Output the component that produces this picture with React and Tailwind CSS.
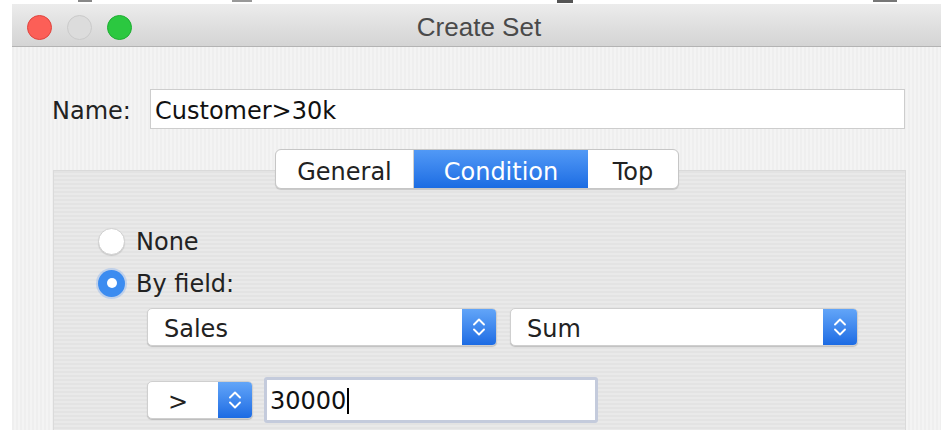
import React from 'react';

const bodyFont = { fontFamily: '"DejaVu Sans", "Liberation Sans", sans-serif' };

// little up/down arrows drawn on the blue end of a popup button
const Stepper = () => (
  <svg width="14" height="22" viewBox="0 0 14 22" fill="none" stroke="white" strokeWidth="1.9" strokeLinecap="round" strokeLinejoin="round">
    <path d="M2 8.5 L7 3.5 L12 8.5" />
    <path d="M2 13.5 L7 18.5 L12 13.5" />
  </svg>
);

const PopUp = ({ label, width, textPad = 'pl-[16px]' }) => (
  <div
    className="flex h-[38px] rounded-[5px] bg-white border border-[#cfcfcf] shadow-[0_1px_1px_rgba(0,0,0,0.18)] overflow-hidden"
    style={{ width }}
  >
    <div className={`flex-1 flex items-center pt-[3px] ${textPad} text-[24px] text-[#222]`}>{label}</div>
    <div className="w-[34px] flex items-center justify-center bg-gradient-to-b from-[#62a5f8] to-[#1c6be3]">
      <Stepper />
    </div>
  </div>
);

const Radio = ({ checked, label }) => (
  <div className="flex items-center h-[42px]">
    {checked ? (
      <div className="w-[27px] h-[27px] rounded-full bg-[#3c8cf0] shadow-[0_0_0_2px_rgba(120,170,240,0.35)] flex items-center justify-center">
        <div className="w-[10px] h-[10px] rounded-full bg-white" />
      </div>
    ) : (
      <div className="w-[27px] h-[27px] rounded-full bg-white border border-[#d0d0d0] shadow-[0_1px_1px_rgba(0,0,0,0.12)]" />
    )}
    <span className="ml-[11px] pt-[2px] text-[24px] text-[#222]">{label}</span>
  </div>
);

export default function App() {
  return (
    <div className="w-[941px] h-[430px] bg-white overflow-hidden" style={bodyFont}>
      {/* clipped bits of the row above the window */}
      <div className="h-[4px] flex items-start">
        <div className="ml-[78px] w-[14px] h-[2px] bg-[#888]" />
        <div className="ml-[140px] w-[20px] h-[2px] bg-[#999]" />
        <div className="ml-[305px] w-[16px] h-[3px] bg-[#555]" />
        <div className="ml-[300px] w-[24px] h-[2px] bg-[#777]" />
      </div>

      <div className="ml-[12px] h-[426px] flex flex-col">
        {/* title bar */}
        <div className="h-[43px] pt-[4px] flex items-center bg-gradient-to-b from-[#ececec] to-[#d4d4d4] border-b border-[#b3b3b3]">
          <div className="w-[123px] flex items-center gap-[15px] pl-[15px]">
            <div className="w-[25px] h-[25px] rounded-full bg-[#fc5f57] border border-[#e0443e]" />
            <div className="w-[25px] h-[25px] rounded-full bg-[#dcdcdc] border border-[#cacaca]" />
            <div className="w-[25px] h-[25px] rounded-full bg-[#2bc840] border border-[#1eae32]" />
          </div>
          <div
            className="flex-1 text-center text-[26px] text-[#4a4a4a] pl-[5px]"
            style={{ fontFamily: '"Liberation Sans", Arial, sans-serif' }}
          >
            Create Set
          </div>
          <div className="w-[123px]" />
        </div>

        {/* window body */}
        <div className="flex-1 bg-[repeating-linear-gradient(90deg,#efefef_0px,#efefef_2px,#f4f4f4_2px,#f4f4f4_4px)]">
          <div className="flex items-center pt-[42px]">
            <span className="ml-[40px] w-[98px] pt-[4px] text-[24px] text-[#222]">Name:</span>
            <div className="w-[755px] h-[40px] bg-white border border-[#cdcdcd] flex items-center pt-[4px] pl-[4px] text-[24px] text-[#111]">
              Customer&gt;30k
            </div>
          </div>

          {/* segmented tabs */}
          <div className="relative z-10 mt-[20px] ml-[263px] flex w-[404px] h-[40px] rounded-[6px] bg-white border border-[#c6c6c6] shadow-[0_1px_1px_rgba(0,0,0,0.15)] overflow-hidden text-[24px]">
            <div className="w-[138px] flex items-center justify-center pt-[5px] text-[#222] border-r border-[#cfcfcf]">General</div>
            <div className="w-[174px] flex items-center justify-center pt-[5px] text-white bg-gradient-to-b from-[#5199f6] to-[#1b6ce3]">Condition</div>
            <div className="flex-1 flex items-center justify-center pt-[5px] text-[#222]">Top</div>
          </div>

          {/* condition group box */}
          <div className="-mt-[19px] ml-[41px] w-[853px] h-[300px] border border-[#dadada] bg-[repeating-linear-gradient(180deg,#e3e3e3_0px,#e3e3e3_2px,#e9e9e9_2px,#e9e9e9_4px)]">
            <div className="pl-[44px] pt-[49px]">
              <Radio label="None" />
              <Radio checked label="By field:" />
            </div>
            <div className="flex gap-[13px] pl-[93px] mt-[4px]">
              <PopUp label="Sales" width={350} />
              <PopUp label="Sum" width={348} />
            </div>
            <div className="flex items-center pl-[93px] mt-[31px]">
              <PopUp label="&gt;" width={106} textPad="pl-[20px]" />
              <div className="ml-[11px] w-[334px] h-[46px] rounded-[3px] border-[3px] border-[#c4cbdc] bg-white flex items-center pt-[2px] pl-[3px] text-[24px] text-[#111]">
                30000
                <span className="ml-[1px] w-[2px] h-[26px] bg-black" />
              </div>
            </div>
          </div>
        </div>
      </div>
    </div>
  );
}
